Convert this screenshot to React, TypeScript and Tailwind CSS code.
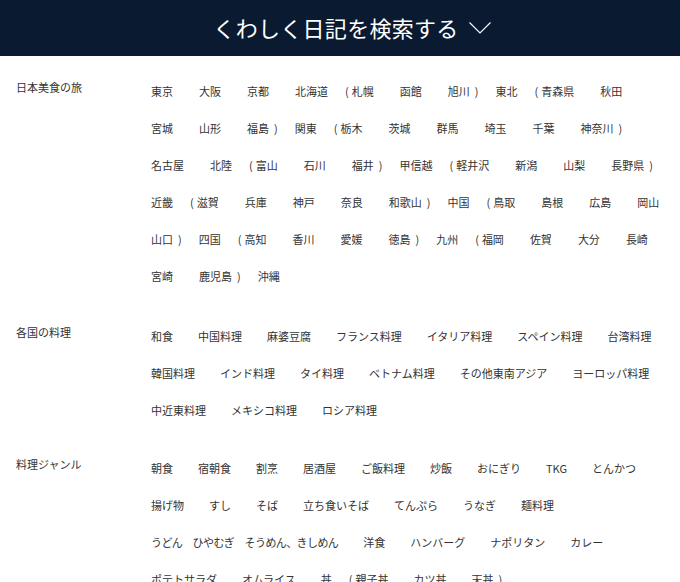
import React from "react";

type Section = {
  label: string;
  gap: "wide" | "normal";
  rows: string[][];
};

// "(" and ")" are their own tokens so the grouping brackets sit tight to the names
const sections: Section[] = [
  {
    label: "日本美食の旅",
    gap: "wide",
    rows: [
      ["東京", "大阪", "京都", "北海道", "(", "札幌", "函館", "旭川", ")", "東北", "(", "青森県", "秋田"],
      ["宮城", "山形", "福島", ")", "関東", "(", "栃木", "茨城", "群馬", "埼玉", "千葉", "神奈川", ")"],
      ["名古屋", "北陸", "(", "富山", "石川", "福井", ")", "甲信越", "(", "軽井沢", "新潟", "山梨", "長野県", ")"],
      ["近畿", "(", "滋賀", "兵庫", "神戸", "奈良", "和歌山", ")", "中国", "(", "鳥取", "島根", "広島", "岡山"],
      ["山口", ")", "四国", "(", "高知", "香川", "愛媛", "徳島", ")", "九州", "(", "福岡", "佐賀", "大分", "長崎"],
      ["宮崎", "鹿児島", ")", "沖縄"],
    ],
  },
  {
    label: "各国の料理",
    gap: "normal",
    rows: [
      ["和食", "中国料理", "麻婆豆腐", "フランス料理", "イタリア料理", "スペイン料理", "台湾料理"],
      ["韓国料理", "インド料理", "タイ料理", "ベトナム料理", "その他東南アジア", "ヨーロッパ料理"],
      ["中近東料理", "メキシコ料理", "ロシア料理"],
    ],
  },
  {
    label: "料理ジャンル",
    gap: "normal",
    rows: [
      ["朝食", "宿朝食", "割烹", "居酒屋", "ご飯料理", "炒飯", "おにぎり", "TKG", "とんかつ"],
      ["揚げ物", "すし", "そば", "立ち食いそば", "てんぷら", "うなぎ", "麺料理"],
      ["うどん　ひやむぎ　そうめん、きしめん", "洋食", "ハンバーグ", "ナポリタン", "カレー"],
      ["ポテトサラダ", "オムライス", "丼", "(", "親子丼", "カツ丼", "天丼", ")"],
    ],
  },
];

function spacing(prev: string | undefined, cur: string, gap: Section["gap"]) {
  if (prev === undefined) return "";
  if (cur === "(") return "ml-[17px]";
  if (cur === ")") return "ml-[5px]";
  if (prev === "(") return "ml-[3px]";
  if (prev === ")") return "ml-[17px]";
  return gap === "wide" ? "ml-[26px]" : "ml-[25px]";
}

function TagRow({ tokens, gap }: { tokens: string[]; gap: Section["gap"] }) {
  return (
    <div className="flex h-[37px] items-center whitespace-nowrap">
      {tokens.map((t, i) => (
        <span
          key={i}
          className={`${spacing(tokens[i - 1], t, gap)} leading-[16px] ${
            t === "(" || t === ")" ? "" : "cursor-pointer hover:underline"
          } ${t.length > 10 ? "tracking-[-0.6px]" : ""}`}
        >
          {t}
        </span>
      ))}
    </div>
  );
}

export default function App() {
  return (
    <div className="min-h-screen bg-white font-['Noto_Sans_CJK_JP','Noto_Sans',sans-serif] text-[#333]">
      <header className="flex h-[56px] items-center justify-center bg-[#0a1a31] pb-[3px] text-white">
        <span className="w-[24px]" />
        <span className="text-[22px] leading-none tracking-[0.3px]">くわしく日記を検索する</span>
        <svg
          className="ml-[10px] mt-[3px]"
          width="22"
          height="12"
          viewBox="0 0 22 12"
          fill="none"
          stroke="#ffffff"
          strokeWidth="1.1"
        >
          <polyline points="0.5,0.5 11,11 21.5,0.5" />
        </svg>
      </header>

      <main className="flex flex-col pt-[16px] text-[11px]">
        {sections.map((s, n) => (
          <section
            key={s.label}
            className={`flex ${n === 1 ? "mt-[23px]" : ""} ${n === 2 ? "mt-[21px]" : ""}`}
          >
            <div className="w-[151px] shrink-0 pl-[16px] leading-[30px]">{s.label}</div>
            <div className="flex flex-col">
              {s.rows.map((r, i) => (
                <TagRow key={i} tokens={r} gap={s.gap} />
              ))}
            </div>
          </section>
        ))}
      </main>
    </div>
  );
}
